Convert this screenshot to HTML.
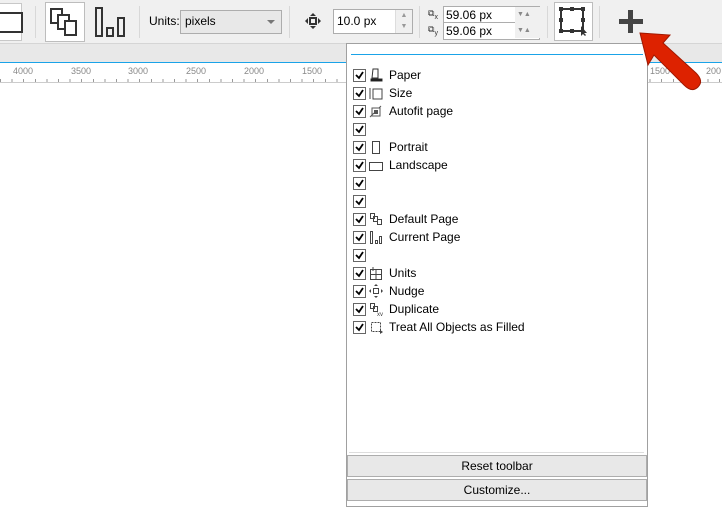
<!DOCTYPE html>
<html><head><style>
body{margin:0;width:722px;height:510px;overflow:hidden;background:#fff;font-family:"Liberation Sans",sans-serif;font-size:12px;color:#000;position:relative}
.a{position:absolute}
.sep{position:absolute;top:6px;width:1px;height:32px;background:#d8d8d8}
.item{position:absolute;left:353px;height:18px;line-height:18px}
.cb{position:absolute;left:0;top:3px;width:11px;height:11px;border:1px solid #666;background:#fff}
.cb svg{position:absolute;left:1px;top:1px}
.lbl{position:absolute;left:36px;top:0;white-space:nowrap}
.ic{position:absolute;left:16px;top:2px}
.btn{position:absolute;left:347px;width:298px;height:20px;background:#e8e8e8;border:1px solid #adadad;text-align:center;line-height:20px}
</style></head><body>
<div class="a" style="left:0;top:0;width:722px;height:43px;background:#f0f0f0;border-bottom:1px solid #d5d5d5"></div>
<div class="a" style="left:-2px;top:3px;width:22px;height:36px;border:1px solid #c8c8c8;background:#fff"></div>
<div class="a" style="left:-4px;top:12px;width:23px;height:17px;border:2px solid #333"></div>
<div class="sep" style="left:35px"></div>
<div class="a" style="left:45px;top:2px;width:38px;height:38px;border:1px solid #bdbdbd;background:#fff"></div>
<svg class="a" style="left:50px;top:8px" width="30" height="30"><rect x="1" y="1" width="11" height="14" fill="none" stroke="#333" stroke-width="2"/><rect x="8" y="7" width="11" height="14" fill="#fff" stroke="#333" stroke-width="2"/><rect x="15" y="13" width="11" height="14" fill="#fff" stroke="#333" stroke-width="2"/></svg>
<svg class="a" style="left:94px;top:6px" width="34" height="32"><rect x="2" y="2" width="6" height="28" fill="none" stroke="#333" stroke-width="2"/><rect x="13" y="22" width="6" height="8" fill="none" stroke="#333" stroke-width="2"/><rect x="24" y="12" width="6" height="18" fill="none" stroke="#333" stroke-width="2"/></svg>
<div class="sep" style="left:139px"></div>
<div class="a" style="left:149px;top:14px">Units:</div>
<div class="a" style="left:180px;top:10px;width:100px;height:22px;background:#e8e8e8;border:1px solid #adadad"><span style="position:absolute;left:4px;top:3px">pixels</span><span style="position:absolute;right:6px;top:9px;border-left:4px solid transparent;border-right:4px solid transparent;border-top:4px solid #777"></span></div>
<div class="sep" style="left:289px"></div>
<svg class="a" style="left:305px;top:13px" width="16" height="16"><path d="M8 0l3 3H5zM8 16l3-3H5zM0 8l3-3v6zM16 8l-3-3v6z" fill="#333"/><rect x="5" y="5" width="6" height="6" fill="none" stroke="#333" stroke-width="2"/></svg>
<div class="a" style="left:333px;top:9px;width:78px;height:23px;background:#fff;border:1px solid #adadad"><span style="position:absolute;left:3px;top:4px">10.0 px</span><div style="position:absolute;right:0;top:0;width:16px;height:23px;background:#f0f0f0;border-left:1px solid #ddd;color:#999;font-size:7px;line-height:11px;text-align:center">▲<br>▼</div></div>
<div class="sep" style="left:419px"></div>
<div class="a" style="left:428px;top:8px;font-size:9px;color:#333">⧉<sub style="font-size:7px">x</sub></div>
<div class="a" style="left:428px;top:24px;font-size:9px;color:#333">⧉<sub style="font-size:7px">y</sub></div>
<div class="a" style="left:443px;top:6px;width:95px;height:32px;background:#fff;border:1px solid #adadad"></div>
<div class="a" style="left:443px;top:22px;width:95px;height:1px;background:#adadad"></div>
<div class="a" style="left:446px;top:8px">59.06 px</div>
<div class="a" style="left:446px;top:24px">59.06 px</div>
<div class="a" style="left:515px;top:7px;width:23px;height:31px;background:#f0f0f0;color:#888;font-size:7px;line-height:16px;padding-left:2px">▼▲<br>▼▲</div>
<div class="sep" style="left:547px"></div>
<div class="a" style="left:554px;top:2px;width:37px;height:37px;border:1px solid #bdbdbd;background:#fff"></div>
<svg class="a" style="left:558px;top:6px" width="32" height="30"><rect x="3" y="3" width="22" height="22" fill="none" stroke="#333" stroke-width="2"/><g fill="#333"><rect x="1" y="1" width="4" height="4"/><rect x="12" y="1" width="4" height="4"/><rect x="23" y="1" width="4" height="4"/><rect x="1" y="12" width="4" height="4"/><rect x="23" y="12" width="4" height="4"/><rect x="1" y="23" width="4" height="4"/><rect x="12" y="23" width="4" height="4"/></g><path d="M23 20l0 10 2-2 2 2 1-1-2-2 3 0z" fill="#333"/></svg>
<div class="sep" style="left:599px"></div>
<div class="a" style="left:619px;top:19px;width:24px;height:5px;background:#444"></div>
<div class="a" style="left:628px;top:10px;width:5px;height:23px;background:#444"></div>
<div class="a" style="left:0;top:44px;width:722px;height:18px;background:#e8e8e8"></div>
<div class="a" style="left:0;top:62px;width:722px;height:1px;background:#1aa3e8"></div>
<div class="a" style="left:0;top:63px;width:722px;height:19px;background:#fff;border-bottom:1px solid #ccc"></div>
<div class="a" style="left:0;top:79px;width:722px;height:3px;background:repeating-linear-gradient(90deg,#999 0 1px,transparent 1px 11.6px)"></div>
<div class="a" style="color:#888;font-size:9px;top:66px;left:13px">4000</div>
<div class="a" style="color:#888;font-size:9px;top:66px;left:71px">3500</div>
<div class="a" style="color:#888;font-size:9px;top:66px;left:128px">3000</div>
<div class="a" style="color:#888;font-size:9px;top:66px;left:186px">2500</div>
<div class="a" style="color:#888;font-size:9px;top:66px;left:244px">2000</div>
<div class="a" style="color:#888;font-size:9px;top:66px;left:302px">1500</div>
<div class="a" style="color:#888;font-size:9px;top:66px;left:650px">1500</div>
<div class="a" style="color:#888;font-size:9px;top:66px;left:706px">200</div>
<div class="a" style="left:346px;top:43px;width:300px;height:462px;background:#fff;border:1px solid #a0a0a0"></div>
<div class="a" style="left:351px;top:54px;width:292px;height:1px;background:#1aa3e8"></div>
<div class="a" style="left:349px;top:452px;width:295px;height:1px;background:#ddd"></div>

<div class="item" style="top:66px"><div class="cb"><svg width="9" height="9"><path d="M1 4l3 3 4-6" fill="none" stroke="#000" stroke-width="1.8"/></svg></div><svg class="ic" width="14" height="14"><path d="M4 1h5v9H3z M2 11h11v2H2z" fill="none" stroke="#333"/><rect x="2" y="11" width="11" height="2" fill="#222"/></svg><span class="lbl">Paper</span></div>
<div class="item" style="top:84px"><div class="cb"><svg width="9" height="9"><path d="M1 4l3 3 4-6" fill="none" stroke="#000" stroke-width="1.8"/></svg></div><svg class="ic" width="14" height="14"><path d="M1 2v11M4 3h9v10H4z" fill="none" stroke="#444"/></svg><span class="lbl">Size</span></div>
<div class="item" style="top:102px"><div class="cb"><svg width="9" height="9"><path d="M1 4l3 3 4-6" fill="none" stroke="#000" stroke-width="1.8"/></svg></div><svg class="ic" width="14" height="14"><path d="M3 4h8v8H3z M1 13l4-4 M12 2l-2 2" fill="none" stroke="#555"/><rect x="5" y="6" width="4" height="4" fill="#555"/></svg><span class="lbl">Autofit page</span></div>
<div class="item" style="top:120px"><div class="cb"><svg width="9" height="9"><path d="M1 4l3 3 4-6" fill="none" stroke="#000" stroke-width="1.8"/></svg></div></div>
<div class="item" style="top:138px"><div class="cb"><svg width="9" height="9"><path d="M1 4l3 3 4-6" fill="none" stroke="#000" stroke-width="1.8"/></svg></div><svg class="ic" width="14" height="14"><rect x="3.5" y="1.5" width="7" height="12" fill="none" stroke="#444"/></svg><span class="lbl">Portrait</span></div>
<div class="item" style="top:156px"><div class="cb"><svg width="9" height="9"><path d="M1 4l3 3 4-6" fill="none" stroke="#000" stroke-width="1.8"/></svg></div><svg class="ic" width="14" height="14"><rect x="0.5" y="4.5" width="13" height="8" fill="none" stroke="#444"/></svg><span class="lbl">Landscape</span></div>
<div class="item" style="top:174px"><div class="cb"><svg width="9" height="9"><path d="M1 4l3 3 4-6" fill="none" stroke="#000" stroke-width="1.8"/></svg></div></div>
<div class="item" style="top:192px"><div class="cb"><svg width="9" height="9"><path d="M1 4l3 3 4-6" fill="none" stroke="#000" stroke-width="1.8"/></svg></div></div>
<div class="item" style="top:210px"><div class="cb"><svg width="9" height="9"><path d="M1 4l3 3 4-6" fill="none" stroke="#000" stroke-width="1.8"/></svg></div><svg class="ic" width="14" height="14"><path d="M1.5 1.5h4v5h-4zM4.5 4.5h4v5h-4zM8.5 7.5h4v5h-4z" fill="#fff" stroke="#444"/></svg><span class="lbl">Default Page</span></div>
<div class="item" style="top:228px"><div class="cb"><svg width="9" height="9"><path d="M1 4l3 3 4-6" fill="none" stroke="#000" stroke-width="1.8"/></svg></div><svg class="ic" width="14" height="14"><path d="M1.5 1.5h2v12h-2zM6.5 10.5h2v3h-2zM10.5 6.5h2v7h-2z" fill="none" stroke="#444"/></svg><span class="lbl">Current Page</span></div>
<div class="item" style="top:246px"><div class="cb"><svg width="9" height="9"><path d="M1 4l3 3 4-6" fill="none" stroke="#000" stroke-width="1.8"/></svg></div></div>
<div class="item" style="top:264px"><div class="cb"><svg width="9" height="9"><path d="M1 4l3 3 4-6" fill="none" stroke="#000" stroke-width="1.8"/></svg></div><svg class="ic" width="14" height="14"><path d="M1.5 3.5h11v10h-11zM7 3.5v10M1.5 8.5h11M4 1v4" fill="none" stroke="#444"/></svg><span class="lbl">Units</span></div>
<div class="item" style="top:282px"><div class="cb"><svg width="9" height="9"><path d="M1 4l3 3 4-6" fill="none" stroke="#000" stroke-width="1.8"/></svg></div><svg class="ic" width="14" height="14"><path d="M7 0l2 2H5zM7 14l2-2H5zM0 7l2-2v4zM14 7l-2-2v4z" fill="#444"/><rect x="4.5" y="4.5" width="5" height="5" fill="none" stroke="#444"/></svg><span class="lbl">Nudge</span></div>
<div class="item" style="top:300px"><div class="cb"><svg width="9" height="9"><path d="M1 4l3 3 4-6" fill="none" stroke="#000" stroke-width="1.8"/></svg></div><svg class="ic" width="14" height="14"><path d="M1.5 1.5h4v5h-4zM4.5 4.5h4v5h-4z" fill="#fff" stroke="#444"/><text x="8" y="14" font-size="6" fill="#444">xy</text></svg><span class="lbl">Duplicate</span></div>
<div class="item" style="top:318px"><div class="cb"><svg width="9" height="9"><path d="M1 4l3 3 4-6" fill="none" stroke="#000" stroke-width="1.8"/></svg></div><svg class="ic" width="14" height="14"><rect x="2.5" y="2.5" width="9" height="9" fill="none" stroke="#444" stroke-dasharray="2 1"/><path d="M11 10l0 4 3-2z" fill="#444"/></svg><span class="lbl">Treat All Objects as Filled</span></div>

<div class="btn" style="top:455px">Reset toolbar</div>
<div class="btn" style="top:479px">Customize...</div>

<svg class="a" style="left:630px;top:25px" width="92" height="75"><path d="M10 8 L40 10 L33 18 L66 48 Q74 56 68 62 Q62 68 54 60 L24 30 L18 40 Z" fill="#dd2200" stroke="#a01800" stroke-width="1"/></svg>
</body></html>
